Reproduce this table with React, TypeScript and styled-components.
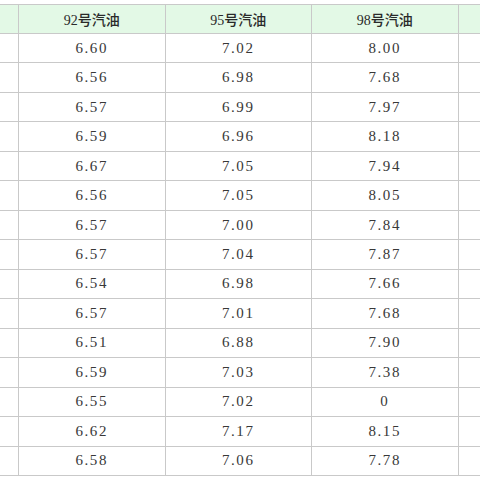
import React from "react";
import styled, { createGlobalStyle } from "styled-components";

const Global = createGlobalStyle`
  html, body { margin: 0; padding: 0; background: #ffffff; overflow: hidden; }
  body { width: 480px; height: 480px; }
`;

const Table = styled.div`
  margin-top: 4px;
  border-top: 1px solid #c9c9c9;
  width: 480px;
`;

const Row = styled.div<{ $head?: boolean }>`
  display: grid;
  grid-template-columns: 19px 146.5px 146.5px 146.5px 1fr;
  height: ${(p) => (p.$head ? "29px" : "29.47px")};
  box-sizing: border-box;
  border-bottom: 1px solid #c9c9c9;
  background: ${(p) => (p.$head ? "#e3f9e6" : "#ffffff")};
`;

const Cell = styled.div<{ $head?: boolean }>`
  display: flex;
  align-items: center;
  justify-content: center;
  border-right: 1px solid #c9c9c9;
  box-sizing: border-box;
  color: ${(p) => (p.$head ? "#2a2a2a" : "#383838")};
  font-family: "Liberation Serif", "Noto Sans CJK SC", serif;
  font-size: ${(p) => (p.$head ? "14px" : "15px")};
  font-weight: ${(p) => (p.$head ? 500 : 400)};
  letter-spacing: ${(p) => (p.$head ? "0" : "1.6px")};
  white-space: nowrap;
  &:last-child { border-right: none; }
`;

const heads = ["92号汽油", "95号汽油", "98号汽油"];

const data: string[][] = [
  ["6.60", "7.02", "8.00"],
  ["6.56", "6.98", "7.68"],
  ["6.57", "6.99", "7.97"],
  ["6.59", "6.96", "8.18"],
  ["6.67", "7.05", "7.94"],
  ["6.56", "7.05", "8.05"],
  ["6.57", "7.00", "7.84"],
  ["6.57", "7.04", "7.87"],
  ["6.54", "6.98", "7.66"],
  ["6.57", "7.01", "7.68"],
  ["6.51", "6.88", "7.90"],
  ["6.59", "7.03", "7.38"],
  ["6.55", "7.02", "0"],
  ["6.62", "7.17", "8.15"],
  ["6.58", "7.06", "7.78"],
];

export default function App() {
  return (
    <>
      <Global />
      <Table>
        <Row $head>
          <Cell $head />
          {heads.map((h) => (
            <Cell $head key={h}>{h}</Cell>
          ))}
          <Cell $head />
        </Row>
        {data.map((r, i) => (
          <Row key={i}>
            <Cell />
            {r.map((v, j) => (
              <Cell key={j}>{v}</Cell>
            ))}
            <Cell />
          </Row>
        ))}
      </Table>
    </>
  );
}
